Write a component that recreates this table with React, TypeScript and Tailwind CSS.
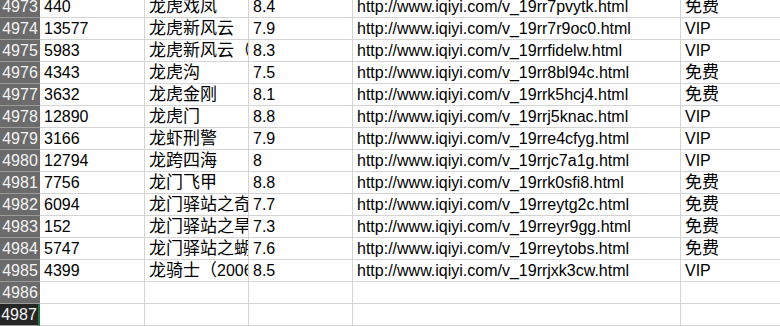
import React from "react";

type Row = { n: number; a?: string; b?: string; c?: string; d?: string; e?: string };

const rows: Row[] = [
  { n: 4973, a: "440", b: "龙虎戏凤", c: "8.4", d: "http://www.iqiyi.com/v_19rr7pvytk.html", e: "免费" },
  { n: 4974, a: "13577", b: "龙虎新风云", c: "7.9", d: "http://www.iqiyi.com/v_19rr7r9oc0.html", e: "VIP" },
  { n: 4975, a: "5983", b: "龙虎新风云（2016）", c: "8.3", d: "http://www.iqiyi.com/v_19rrfidelw.html", e: "VIP" },
  { n: 4976, a: "4343", b: "龙虎沟", c: "7.5", d: "http://www.iqiyi.com/v_19rr8bl94c.html", e: "免费" },
  { n: 4977, a: "3632", b: "龙虎金刚", c: "8.1", d: "http://www.iqiyi.com/v_19rrk5hcj4.html", e: "免费" },
  { n: 4978, a: "12890", b: "龙虎门", c: "8.8", d: "http://www.iqiyi.com/v_19rrj5knac.html", e: "VIP" },
  { n: 4979, a: "3166", b: "龙虾刑警", c: "7.9", d: "http://www.iqiyi.com/v_19rre4cfyg.html", e: "VIP" },
  { n: 4980, a: "12794", b: "龙跨四海", c: "8", d: "http://www.iqiyi.com/v_19rrjc7a1g.html", e: "VIP" },
  { n: 4981, a: "7756", b: "龙门飞甲", c: "8.8", d: "http://www.iqiyi.com/v_19rrk0sfi8.html", e: "免费" },
  { n: 4982, a: "6094", b: "龙门驿站之奇案", c: "7.7", d: "http://www.iqiyi.com/v_19rreytg2c.html", e: "免费" },
  { n: 4983, a: "152", b: "龙门驿站之旱魃", c: "7.3", d: "http://www.iqiyi.com/v_19rreyr9gg.html", e: "免费" },
  { n: 4984, a: "5747", b: "龙门驿站之蝴蝶", c: "7.6", d: "http://www.iqiyi.com/v_19rreytobs.html", e: "免费" },
  { n: 4985, a: "4399", b: "龙骑士（2006）", c: "8.5", d: "http://www.iqiyi.com/v_19rrjxk3cw.html", e: "VIP" },
  { n: 4986 },
  { n: 4987 },
];

function Mixed({ text }: { text?: string }) {
  if (!text) return null;
  const parts = text.match(/[\u3000-\u9fff\uff00-\uffef]+|[^\u3000-\u9fff\uff00-\uffef]+/g) || [];
  return (
    <>
      {parts.map((p, i) =>
        /[\u3000-\u9fff\uff00-\uffef]/.test(p) ? (
          <span key={i} className="text-[17px]">
            {p}
          </span>
        ) : (
          <span key={i}>{p}</span>
        )
      )}
    </>
  );
}

const cell =
  "flex items-center h-full overflow-hidden whitespace-nowrap pl-[4px] border-r border-b border-[#d4d4d4] text-[16px] text-black";

export default function App() {
  return (
    <div
      className="w-[780px] h-[326px] overflow-hidden bg-white"
      style={{ fontFamily: '"Liberation Sans", Arial, "Noto Sans CJK SC", sans-serif' }}
    >
      <div className="-mt-[4px] flex flex-col">
        {rows.map((r) => {
          const selected = r.n === 4987;
          return (
            <div key={r.n} className="flex h-[22px] shrink-0">
              <div
                className={
                  selected
                    ? "flex items-center justify-center w-[40px] shrink-0 h-full bg-[#262626] text-[#f4f4f4] text-[16px] border-b border-[#9a9a9a] border-r-2 border-r-[#217346]"
                    : "flex items-center justify-center w-[40px] shrink-0 h-full bg-[#6b6b6b] text-[#f4f4f4] text-[16px] border-b border-[#9a9a9a]"
                }
              >
                {r.n}
              </div>
              <div className={`${cell} w-[105px] shrink-0`}>{r.a}</div>
              <div className={`${cell} w-[104px] shrink-0`}>
                <Mixed text={r.b} />
              </div>
              <div className={`${cell} w-[104px] shrink-0`}>{r.c}</div>
              <div className={`${cell} w-[328px] shrink-0`}>{r.d}</div>
              <div className={`${cell} flex-1 border-r-0`}>
                <Mixed text={r.e} />
              </div>
            </div>
          );
        })}
      </div>
    </div>
  );
}
